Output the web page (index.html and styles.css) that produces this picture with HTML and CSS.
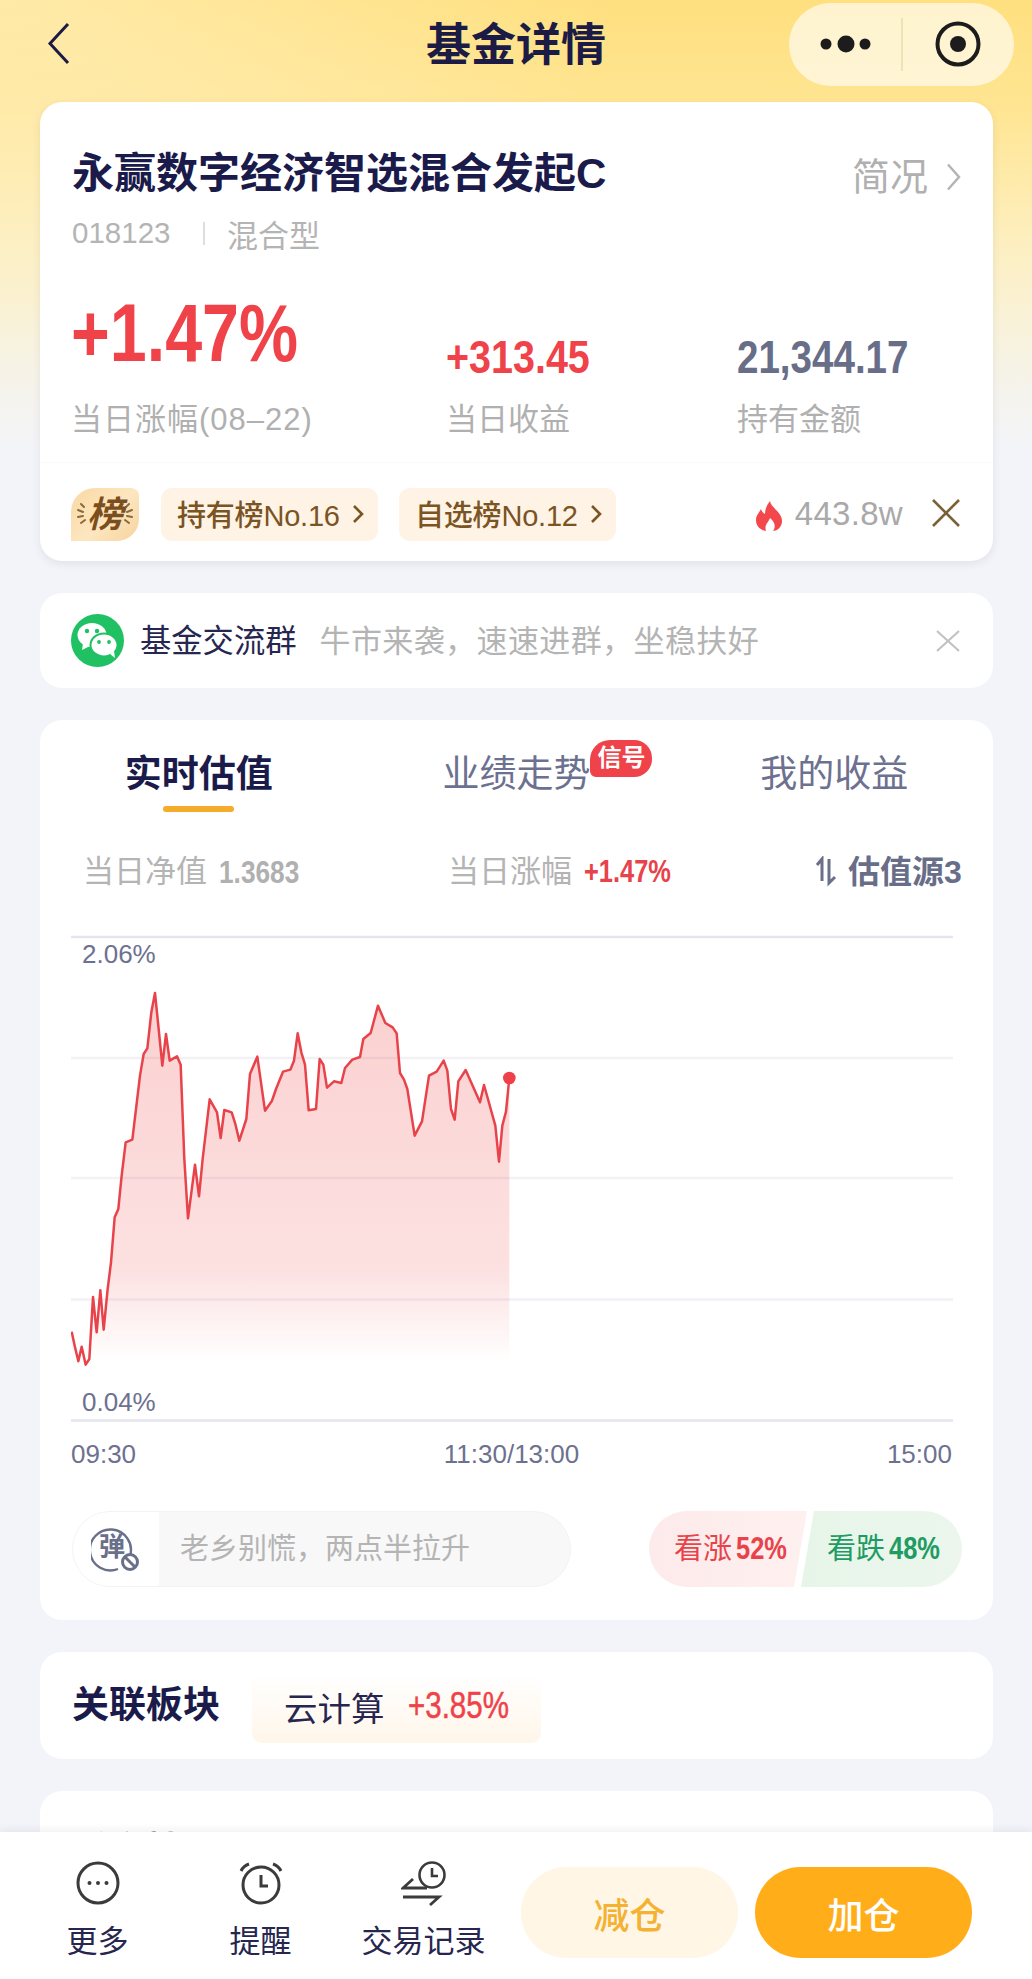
FILE: index.html
```html
<!DOCTYPE html>
<html lang="zh-CN">
<head>
<meta charset="utf-8">
<title>基金详情</title>
<link rel="stylesheet" href="styles.css">
</head>
<body>
<div class="app">
  <main class="main">
    <header class="nav">
      <svg class="nav-back" width="24" height="44" viewBox="0 0 24 44"><path d="M21 2 L3 21.5 L21 41" fill="none" stroke="#1b1b45" stroke-width="3"/></svg>
      <h1 class="nav-title">基金详情</h1>
      <div class="capsule">
        <svg class="capsule-svg" width="225" height="83" viewBox="0 0 225 83">
          <circle cx="37" cy="41" r="5.5" fill="#1c1c1c"/><circle cx="57" cy="41" r="8.5" fill="#1c1c1c"/><circle cx="76" cy="41" r="5.5" fill="#1c1c1c"/>
          <path d="M113 15V68" stroke="#e9dcae" stroke-width="1.5"/>
          <circle cx="169" cy="41" r="20.5" fill="none" stroke="#1c1c1c" stroke-width="4"/><circle cx="169" cy="41" r="8" fill="#1c1c1c"/>
        </svg>
      </div>
    </header>

    <section class="card card-fund">
      <div class="fund-head">
        <h2 class="fund-name">永赢数字经济智选混合发起C</h2>
        <div class="fund-brief">简况<svg width="15" height="28" viewBox="0 0 15 28"><path d="M2 1.5 L13 14 L2 26.5" fill="none" stroke="#b4b4b4" stroke-width="2.5"/></svg></div>
      </div>
      <div class="fund-meta"><span class="fund-code">018123</span><i class="fund-sep"></i><span>混合型</span></div>
      <div class="fund-stats">
        <div class="stat"><div class="stat-big num">+1.47%</div><div class="stat-label stat-label-wide">当日涨幅(08–22)</div></div>
        <div class="stat"><div class="stat-mid num red">+313.45</div><div class="stat-label">当日收益</div></div>
        <div class="stat"><div class="stat-mid num slate">21,344.17</div><div class="stat-label">持有金额</div></div>
      </div>
      <div class="rank">
        <div class="rank-badge">
          <svg class="rank-wheat" width="68" height="53" viewBox="0 0 68 53"><g fill="none" stroke="#8a6a3a" stroke-width="2" stroke-linecap="round"><path d="M10 16l3 3M7 22l5 2M7 29l5-1M10 35l4-3M58 16l-3 3M61 22l-5 2M61 29l-5-1M58 35l-4-3"/></g></svg>
          <span class="rank-char">榜</span>
        </div>
        <div class="pill">持有榜No.16<svg width="13" height="22" viewBox="0 0 13 22"><path d="M2 3 L10 11 L2 19" fill="none" stroke="#7a5423" stroke-width="2.6"/></svg></div>
        <div class="pill">自选榜No.12<svg width="13" height="22" viewBox="0 0 13 22"><path d="M2 3 L10 11 L2 19" fill="none" stroke="#7a5423" stroke-width="2.6"/></svg></div>
        <svg class="flame" width="28" height="32" viewBox="0 0 28 32"><path d="M15 1C16 8 27 12 27 21C27 28 21 31 18 31C21 27 20 22 15 18C13 23 9 25 11 31C6 30 1 27 1 20C1 15 4 13 6 9C7 12 8 13 10 14C10 9 12 5 15 1Z" fill="#f2484b"/></svg>
        <span class="heat">443.8w</span>
        <svg class="rank-close" width="30" height="30" viewBox="0 0 30 30"><path d="M2 2L28 28M28 2L2 28" stroke="#7d6136" stroke-width="2.6"/></svg>
      </div>
    </section>

    <section class="card card-group">
      <svg class="wechat" width="53" height="53" viewBox="0 0 53 53">
        <circle cx="26.5" cy="26.5" r="26.5" fill="#20c162"/>
        <ellipse cx="21" cy="21" rx="14.5" ry="12" fill="#fff"/><path d="M12 29l-1 7 8-4z" fill="#fff"/>
        <ellipse cx="33" cy="31" rx="13.5" ry="11.5" fill="#fff" stroke="#20c162" stroke-width="2"/><path d="M39 40l5 4-1-7z" fill="#fff"/>
        <circle cx="16" cy="17" r="2.2" fill="#20c162"/><circle cx="26" cy="17" r="2.2" fill="#20c162"/><circle cx="28" cy="28" r="1.9" fill="#20c162"/><circle cx="38" cy="28" r="1.9" fill="#20c162"/>
      </svg>
      <span class="group-name">基金交流群</span>
      <span class="group-tip">牛市来袭，速速进群，坐稳扶好</span>
      <svg class="group-close" width="24" height="22" viewBox="0 0 24 22"><path d="M1 1L23 21M23 1L1 21" stroke="#c2c2c2" stroke-width="2.2"/></svg>
    </section>

    <section class="card card-chart">
      <div class="tabs">
        <div class="tab is-active"><span class="tab-label">实时估值</span><i class="tab-line"></i></div>
        <div class="tab"><span class="tab-label">业绩走势<em class="tab-badge">信号</em></span></div>
        <div class="tab"><span class="tab-label">我的收益</span></div>
      </div>
      <div class="quote">
        <div class="quote-item">当日净值<b class="num quote-nav">1.3683</b></div>
        <div class="quote-item">当日涨幅<b class="num quote-rise">+1.47%</b></div>
        <div class="quote-src">
          <svg class="quote-src-icon" width="24" height="34" viewBox="0 0 24 34"><path d="M2 9L7 3V25M14 3V27L20 21" fill="none" stroke="#6a6f8a" stroke-width="3"/></svg>
          <span>估值源3</span>
        </div>
      </div>
      <div class="chart">
        <svg class="chart-svg" width="882" height="490" viewBox="0 0 882 490">
          <defs>
            <linearGradient id="areaFill" gradientUnits="userSpaceOnUse" x1="0" y1="222" x2="0" y2="1332">
              <stop offset="0" stop-color="#ef4444" stop-opacity=".25"/>
              <stop offset=".75" stop-color="#ef4444" stop-opacity=".16"/>
              <stop offset="1" stop-color="#ef4444" stop-opacity="0"/>
            </linearGradient>
          </defs>
          <path d="M0 4H882M0 487.5H882" stroke="#e4e5ee" stroke-width="2.4"/>
          <path d="M0 125H882M0 245H882M0 366.500H882" stroke="#f1f1f6" stroke-width="2.4"/>
          <g transform="translate(-31 -14) scale(.33333)">
            <polygon fill="url(#areaFill)" points="95,1340 95,1238 104,1280 115,1327 125,1283 137,1337 148,1320 159,1134 170,1240 181,1114 191,1232 203,1110 213,1030 224,895 235,870 245,770 257,670 277,662 300,470 311,405 322,388 334,280 345,222 356,330 367,440 378,345 389,425 411,412 422,437 433,720 444,898 465,737 477,832 488,720 509,541 531,580 542,657 553,573 575,580 586,615 598,665 619,600 630,465 652,413 675,575 696,545 708,510 729,458 751,452 762,425 773,343 784,400 795,437 806,574 828,570 839,420 850,437 861,506 882,487 904,492 915,447 937,422 960,414 970,360 992,342 1014,260 1036,312 1058,325 1070,343 1080,462 1092,482 1102,510 1124,650 1146,607 1167,470 1190,458 1211,425 1222,455 1233,570 1244,602 1255,487 1277,453 1320,550 1332,498 1343,537 1366,620 1377,728 1387,620 1398,578 1408,477 1408,1340"/>
            <polyline fill="none" stroke="#e8434a" stroke-width="7.5" stroke-linejoin="round" points="95,1238 104,1280 115,1327 125,1283 137,1337 148,1320 159,1134 170,1240 181,1114 191,1232 203,1110 213,1030 224,895 235,870 245,770 257,670 277,662 300,470 311,405 322,388 334,280 345,222 356,330 367,440 378,345 389,425 411,412 422,437 433,720 444,898 465,737 477,832 488,720 509,541 531,580 542,657 553,573 575,580 586,615 598,665 619,600 630,465 652,413 675,575 696,545 708,510 729,458 751,452 762,425 773,343 784,400 795,437 806,574 828,570 839,420 850,437 861,506 882,487 904,492 915,447 937,422 960,414 970,360 992,342 1014,260 1036,312 1058,325 1070,343 1080,462 1092,482 1102,510 1124,650 1146,607 1167,470 1190,458 1211,425 1222,455 1233,570 1244,602 1255,487 1277,453 1320,550 1332,498 1343,537 1366,620 1377,728 1387,620 1398,578 1408,477"/>
            <circle cx="1408" cy="477" r="19" fill="#ef4049"/>
          </g>
        </svg>
        <span class="chart-label chart-max">2.06%</span>
        <span class="chart-label chart-min">0.04%</span>
      </div>
      <div class="axis"><span>09:30</span><span>11:30/13:00</span><span>15:00</span></div>
      <div class="actions">
        <div class="danmu">
          <div class="danmu-icon">
            <svg width="50" height="46" viewBox="0 0 50 46">
              <path d="M39 30A20.500 20.500 0 1 0 27 43" fill="none" stroke="#6a6f8a" stroke-width="2.4"/>
              <text x="21" y="30" text-anchor="middle" class="danmu-char">弹</text>
              <circle cx="39" cy="36" r="7.500" fill="#fff" stroke="#6a6f8a" stroke-width="3"/><path d="M34 31L44 41" stroke="#6a6f8a" stroke-width="3"/>
            </svg>
          </div>
          <div class="danmu-text">老乡别慌，两点半拉升</div>
        </div>
        <div class="vote">
          <div class="vote-item vote-up">看涨<b class="num">52%</b></div>
          <div class="vote-item vote-down">看跌<b class="num">48%</b></div>
        </div>
      </div>
    </section>

    <section class="card card-sector">
      <h3 class="card-title">关联板块</h3>
      <div class="sector-tag"><span>云计算</span><b class="num">+3.85%</b></div>
    </section>

    <section class="card card-next">
      <h3 class="card-title">重仓持股</h3>
    </section>
  </main>

  <footer class="bar">
    <div class="bar-item">
      <svg width="46" height="46" viewBox="0 0 46 46"><circle cx="23" cy="23" r="20" fill="none" stroke="#3b3b3b" stroke-width="3"/><circle cx="14.500" cy="23" r="2" fill="#3b3b3b"/><circle cx="23" cy="23" r="2" fill="#3b3b3b"/><circle cx="31.500" cy="23" r="2" fill="#3b3b3b"/></svg>
      <span>更多</span>
    </div>
    <div class="bar-item">
      <svg width="46" height="46" viewBox="0 0 46 46"><circle cx="23" cy="25" r="18" fill="none" stroke="#3b3b3b" stroke-width="3"/><path d="M3 11C5 7 8 5 11 4M43 11C41 7 38 5 35 4" fill="none" stroke="#3b3b3b" stroke-width="3"/><path d="M23 15V26H30" fill="none" stroke="#3b3b3b" stroke-width="3"/></svg>
      <span>提醒</span>
    </div>
    <div class="bar-item">
      <svg width="46" height="46" viewBox="0 0 46 46"><circle cx="31" cy="15" r="12.500" fill="none" stroke="#3b3b3b" stroke-width="2.600"/><path d="M31 8V16H37" fill="none" stroke="#3b3b3b" stroke-width="2.600"/><path d="M12 19L2 28H26M2 37H38L29 45" fill="none" stroke="#3b3b3b" stroke-width="2.800"/></svg>
      <span>交易记录</span>
    </div>
    <button class="btn btn-sell">减仓</button>
    <button class="btn btn-buy">加仓</button>
  </footer>
</div>
</body>
</html>
```
FILE: styles.css
```css
* { box-sizing: border-box; }
html, body { margin: 0; padding: 0; }
body {
  font-family: "Liberation Sans", "Noto Sans CJK SC", sans-serif;
  color: #1b1b4b;
  background: #f3f4f9;
}
h1, h2, h3 { margin: 0; font-weight: 700; }
/* condensed numerals: no narrow family is installed */
.num { display: inline-block; transform: scaleX(.82); transform-origin: 0 50%; }
.red { color: #ef4249; transform: scaleX(.84); }
.slate { color: #686d88; }

.app { display: flex; flex-direction: column; height: 100vh; overflow: hidden; }
.main {
  flex: 1;
  min-height: 0;
  overflow: hidden;
  padding: 0 39px 0 40px;
  display: flex;
  flex-direction: column;
  gap: 32px;
  background:
    radial-gradient(ellipse 620px 300px at 0 0, rgba(255,255,255,.32), rgba(255,255,255,0) 100%),
    linear-gradient(180deg, #ffe07f 0, #ffe593 110px, #fdeebb 230px, #f9f2d8 320px, #f5f3ec 390px, #f3f4f9 450px);
}

.nav {
  flex: none;
  height: 102px;
  margin-bottom: -32px;
  margin-left: -40px;
  margin-right: -39px;
  display: grid;
  grid-template-columns: 1fr auto 1fr;
  position: relative;
}
.nav-back { margin: 22px 0 0 47px; }
.nav-title { font-size: 45px; line-height: 60px; margin-top: 16px; color: #1b1b45; }
.capsule {
  justify-self: end;
  width: 225px;
  height: 83px;
  margin: 3px 18px 0 0;
  border-radius: 42px;
  background: rgba(255,255,255,.62);
}
.capsule-svg { display: block; }

.card { flex: none; background: #fff; border-radius: 22px; }

.card-fund { padding-top: 47px; height: 459px; box-shadow: 0 3px 8px rgba(60,60,90,.09); }
.fund-head { display: flex; justify-content: space-between; align-items: center; padding: 0 32px; height: 50px; }
.fund-name { font-size: 42px; line-height: 50px; font-weight: 700; color: #1b1b4b; }
.fund-brief { display: flex; align-items: center; gap: 18px; font-size: 38px; line-height: 50px; color: #b0b0b0; margin-top: 6px; }
.fund-meta { display: flex; align-items: center; padding: 0 32px; margin-top: 14px; height: 40px; font-size: 31px; color: #b4b4b4; }
.fund-code { font-size: 29.500px; width: 99px; }
.fund-sep { width: 2px; height: 23px; background: #dedede; margin: 0 22px 0 32px; }
.fund-stats {
  display: grid;
  grid-template-columns: 375px 291px 1fr;
  align-items: end;
  padding-left: 31px;
  margin-top: 30px;
}
.stat { display: flex; flex-direction: column; }
.stat-big { font-size: 82px; line-height: 100px; font-weight: 700; color: #ef4249; margin-bottom: 17px; transform: scaleX(.81); }
.stat-mid { font-size: 47px; line-height: 40px; font-weight: 700; margin-bottom: 23px; }
.stat-label { font-size: 31px; line-height: 40px; color: #b0b0b0; }
.stat-label-wide { letter-spacing: 1px; }

.rank {
  display: flex;
  align-items: center;
  margin-top: 22px;
  padding: 25px 32px 0 31px;
  border-top: 1px solid #fafafa;
}
.rank-badge {
  position: relative;
  width: 68px;
  height: 53px;
  margin-right: 22px;
  border-radius: 24px 8px 22px 0;
  background: linear-gradient(135deg, #f9d9a4, #fde6c0 55%, #f6d29c);
  text-align: center;
}
.rank-wheat { position: absolute; left: 0; top: 0; }
.rank-char { position: relative; font-size: 36px; line-height: 53px; font-weight: 700; font-style: italic; color: #7d4e1d; }
.pill {
  display: flex;
  align-items: center;
  justify-content: space-between;
  width: 217px;
  height: 53px;
  padding: 0 13px 4px 16px;
  margin-right: 21px;
  border-radius: 11px;
  background: #fff3e5;
  color: #7a5423;
  font-size: 29px;
  font-weight: 500;
  letter-spacing: -.2px;
}
.pill svg { margin-top: 2px; }
.flame { margin-left: auto; margin-top: 2px; }
.heat { font-size: 33px; color: #a9a9a9; margin-left: 12px; margin-top: -2px; letter-spacing: .3px; }
.rank-close { margin-left: 28px; margin-top: -4px; }

.card-group { display: flex; align-items: center; height: 95px; padding: 0 33px 0 31px; }
.wechat { margin-right: 16px; }
.group-name { font-size: 31.300px; color: #26264f; margin-top: -5px; }
.group-tip { font-size: 31px; letter-spacing: .4px; color: #b4b4b4; margin: -5px 0 0 23px; }
.group-close { margin-left: auto; }

.card-chart { height: 900px; padding-top: 29px; }
.tabs { display: grid; grid-template-columns: repeat(3, 1fr); height: 63px; }
.tab { display: flex; flex-direction: column; align-items: center; }
.tab-label { position: relative; font-size: 37px; line-height: 52px; color: #6d7190; }
.is-active .tab-label { font-weight: 700; color: #1b1b4b; }
.tab-line { width: 71px; height: 6px; margin-top: 5px; border-radius: 3px; background: #f5ac2a; }
.tab-badge {
  position: absolute;
  left: 100%;
  top: -9px;
  width: 62px;
  height: 37px;
  border-radius: 20px 18px 18px 6px;
  background: #ef4249;
  color: #fff;
  font-size: 24px;
  line-height: 35px;
  font-style: normal;
  font-weight: 700;
  text-align: center;
}
.quote {
  display: grid;
  grid-template-columns: 365px 366px 1fr;
  align-items: center;
  height: 40px;
  padding-left: 43px;
  margin-top: 40px;
  margin-bottom: 1px;
}
.quote-item { font-size: 31px; line-height: 40px; color: #b4b4b4; display: flex; align-items: center; }
.quote-nav { font-size: 32px; margin-left: 12px; color: #b0b0b0; }
.quote-rise { font-size: 31px; margin-left: 12px; color: #e8434a; }
.quote-src { display: flex; align-items: center; gap: 9px; font-size: 32px; font-weight: 700; color: #686d88; margin: -6px 0 0 1px; }
.quote-src-icon { margin-top: 8px; }

.chart { position: relative; height: 490px; margin: 41px 0 0 31px; }
.chart-svg { display: block; }
.chart-label { position: absolute; left: 11px; font-size: 26px; line-height: 30px; color: #6d7190; }
.chart-max { top: 6px; }
.chart-min { top: 454px; }
.danmu-char { font-size: 26px; font-weight: 700; fill: #6a6f8a; }
.axis { display: flex; justify-content: space-between; height: 30px; margin: 16px 41px 0 31px; font-size: 26px; line-height: 30px; color: #6d7190; }

.actions { display: flex; justify-content: space-between; height: 76px; margin-top: 42px; padding: 0 31px 0 32px; }
.danmu {
  display: flex;
  width: 499px;
  border: 1px solid #f3f3f3;
  border-radius: 38px;
  overflow: hidden;
  background: #f8f8f8;
}
.danmu-icon { flex: none; width: 86px; display: flex; align-items: center; padding-left: 18px; background: #fff; }
.danmu-text { padding-left: 21px; font-size: 29px; line-height: 74px; color: #b4b4b4; }
.vote { display: flex; width: 313px; }
.vote-item { height: 76px; font-size: 29px; line-height: 76px; white-space: nowrap; }
.vote-item b { font-size: 31px; margin-left: 4px; }
.vote-up {
  width: 158px;
  padding-left: 25px;
  border-radius: 38px 0 0 38px;
  background: linear-gradient(90deg, #fdeaea, #fff0f0);
  color: #e8434a;
  clip-path: polygon(0 0, 100% 0, calc(100% - 13px) 100%, 0 100%);
}
.vote-down {
  width: 161px;
  margin-left: -6px;
  padding-left: 26px;
  border-radius: 0 38px 38px 0;
  background: linear-gradient(90deg, #e7f5e9, #ecf6ec);
  color: #1e9c64;
  clip-path: polygon(13px 0, 100% 0, 100% 100%, 0 100%);
}

.card-sector { display: flex; align-items: flex-start; height: 107px; padding: 21px 0 0 32px; }
.card-title { font-size: 37px; line-height: 50px; color: #1b1b4b; }
.card-sector .card-title { margin: 8px 32px 0 0; }
.sector-tag {
  display: flex;
  align-items: center;
  width: 289px;
  height: 70px;
  padding: 0 0 4px 32px;
  border-radius: 10px;
  background: linear-gradient(180deg, #fff, #fff6ea);
}
.sector-tag span { font-size: 33.500px; color: #26264f; }
.sector-tag b { font-size: 36px; margin-left: 23px; font-weight: 400; color: #ef4249; -webkit-text-stroke: .5px #ef4249; }

.card-next { height: 140px; padding: 36px 0 0 32px; }

.bar {
  flex: none;
  position: relative;
  height: 147px;
  display: grid;
  grid-template-columns: repeat(3, 163px) 217px 217px;
  padding: 28px 0 0 16px;
  background: #fff;
  box-shadow: 0 -2px 8px rgba(40,40,70,.07);
}
.bar-item { display: flex; flex-direction: column; align-items: center; }
.bar-item svg { display: block; }
.bar-item span { font-size: 31px; line-height: 40px; margin-top: 16px; color: #26264f; }
.btn {
  width: 217px;
  height: 91px;
  margin-top: 7px;
  border: 0;
  border-radius: 46px;
  font-family: inherit;
  font-size: 36px;
  font-weight: 500;
}
.btn-sell { margin-left: 16px; background: #fff6e6; color: #f5b132; }
.btn-buy { margin-left: 33px; background: #ffae1a; color: #fff; }
```
